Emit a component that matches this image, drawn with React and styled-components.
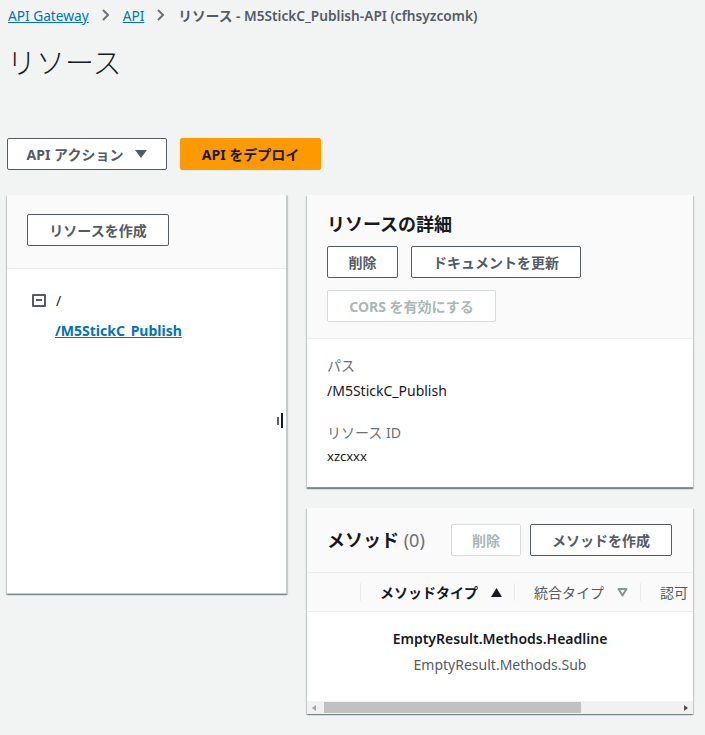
import React from 'react';
import styled, { createGlobalStyle } from 'styled-components';

const GlobalStyle = createGlobalStyle`
  html, body {
    margin: 0;
    padding: 0;
    background: #f2f3f3;
  }
  body {
    font-family: "Noto Sans", "Noto Sans CJK JP", sans-serif;
    color: #16191f;
    font-size: 14px;
  }
  * { box-sizing: border-box; }
`;

const Page = styled.div`
  width: 705px;
  height: 735px;
  overflow: hidden;
  padding: 5px 0 0 7px;
`;

const Crumbs = styled.nav`
  display: flex;
  align-items: center;
  gap: 9px;
  height: 20px;
  padding-left: 1px;
  font-size: 13.7px;
  white-space: nowrap;

  a {
    color: #0073bb;
    text-decoration: underline;
  }
  span.current {
    color: #545b64;
    font-weight: 600;
  }
`;

const Chevron = styled.svg`
  width: 12px;
  height: 12px;
  margin: 0 2px;
`;

const Title = styled.h1`
  margin: 18px 0 0 0;
  font-size: 29px;
  font-weight: 300;
  line-height: 40px;
  color: #16191f;
`;

const Actions = styled.div`
  display: flex;
  gap: 13px;
  margin-top: 55px;
`;

const Button = styled.button`
  height: 32px;
  padding: 0 20px;
  border-radius: 2px;
  font-family: inherit;
  font-size: 14px;
  font-weight: 700;
  white-space: nowrap;
  display: inline-flex;
  align-items: center;
  justify-content: center;
  gap: 12px;
  background: ${(p) => (p.$primary ? '#ff9900' : '#fff')};
  border: 1px solid ${(p) => (p.$primary ? '#ff9900' : p.disabled ? '#d5dbdb' : '#545b64')};
  color: ${(p) => (p.$primary ? '#16191f' : p.disabled ? '#aab7b8' : '#545b64')};
  width: ${(p) => (p.$w ? `${p.$w}px` : 'auto')};
`;

const Caret = styled.span`
  width: 0;
  height: 0;
  border-left: 6px solid transparent;
  border-right: 6px solid transparent;
  border-top: 8px solid #545b64;
`;

const Columns = styled.div`
  display: flex;
  gap: 20px;
  margin-top: 25px;
  align-items: flex-start;
`;

const Panel = styled.section`
  position: relative;
  background: #fff;
  box-shadow: 0 1px 1px 0 rgba(0, 28, 36, 0.3), 1px 1px 1px 0 rgba(0, 28, 36, 0.15),
    -1px 1px 1px 0 rgba(0, 28, 36, 0.15);
  border-bottom: ${(p) => (p.$line ? '1px solid #879596' : 'none')};
`;

const TreePanel = styled(Panel)`
  width: 280px;
  height: 399px;
  border-right: 1px solid #c5cbcb;
  border-bottom: 1px solid #c5cbcb;
`;

const GrayHead = styled.div`
  background: #fafafa;
  border-bottom: 1px solid #eaeded;
  padding: ${(p) => p.$pad};
`;

const TreeBody = styled.div`
  padding: 24px 0 0 25px;
`;

const TreeRow = styled.div`
  display: flex;
  align-items: center;
  gap: 10px;
  height: 14px;
  color: #16191f;
`;

const Collapse = styled.span`
  width: 14px;
  height: 13px;
  border: 2px solid #545b64;
  border-radius: 1px;
  display: flex;
  align-items: center;
  justify-content: center;

  &::after {
    content: '';
    width: 6px;
    height: 2px;
    background: #545b64;
  }
`;

const TreeLink = styled.a`
  display: block;
  margin: 14px 0 0 23px;
  color: #0073bb;
  font-weight: 700;
  text-decoration: underline;
`;

const Resizer = styled.div`
  position: absolute;
  right: 3px;
  top: 218px;
  display: flex;
  align-items: center;
  gap: 2px;

  span {
    width: 2px;
    background: #16191f;
  }
  span:first-child { height: 8px; opacity: 0.7; }
  span:last-child { height: 15px; }
`;

const RightCol = styled.div`
  width: 386px;
  display: flex;
  flex-direction: column;
  gap: 20px;
`;

const PanelTitle = styled.h2`
  margin: 0;
  font-size: 18px;
  font-weight: 700;
  line-height: 24px;
  color: #16191f;

  small {
    font-size: 18px;
    font-weight: 400;
    color: #687078;
  }
`;

const ButtonRow = styled.div`
  display: flex;
  gap: ${(p) => p.$gap || 13}px;
  margin-top: ${(p) => p.$mt || 0}px;
`;

const Details = styled.div`
  padding: 17px 20px 21px;
  line-height: 20px;
`;

const Label = styled.div`
  color: #687078;
  margin-top: ${(p) => p.$mt || 0}px;
`;

const Value = styled.div`
  color: #16191f;
  margin-top: ${(p) => (p.$small ? 3 : 5)}px;
  font-size: ${(p) => (p.$small ? 13 : 14)}px;
`;

const MethodsHead = styled(GrayHead)`
  height: 65px;
  display: flex;
  align-items: center;
  justify-content: space-between;
`;

const TableHead = styled.div`
  display: flex;
  height: 39px;
  background: #fafafa;
  border-bottom: 1px solid #eaeded;
  overflow: hidden;
  white-space: nowrap;
`;

const Th = styled.div`
  position: relative;
  flex: 0 0 ${(p) => p.$w}px;
  display: flex;
  align-items: center;
  gap: 13px;
  padding-left: 20px;
  font-weight: ${(p) => (p.$active ? 700 : 400)};
  color: ${(p) => (p.$active ? '#16191f' : '#545b64')};

  &::before {
    content: '';
    display: ${(p) => (p.$sep ? 'block' : 'none')};
    position: absolute;
    left: 0;
    top: 10px;
    height: 18px;
    width: 1px;
    background: #eaeded;
  }
`;

const SortIcon = styled.svg`
  width: 11px;
  height: 9px;
`;

const Empty = styled.div`
  height: 89px;
  display: flex;
  flex-direction: column;
  align-items: center;
  padding-top: 17px;
  gap: 6px;
  line-height: 20px;

  b { color: #16191f; font-size: 14px; font-weight: 600; }
  span { color: #545b64; }
`;

const Scrollbar = styled.div`
  height: 13px;
  background: #f1f1f1;
  display: flex;
  align-items: center;
  padding: 0 5px;
  gap: 6px;
`;

const Arrow = styled.span`
  width: 0;
  height: 0;
  border-top: 3px solid transparent;
  border-bottom: 3px solid transparent;
  ${(p) => (p.$left ? 'border-right: 4px solid #a3a3a3;' : 'border-left: 4px solid #505050;')}
`;

const Track = styled.div`
  flex: 1;
  height: 11px;
  display: flex;
  padding-left: 2px;
`;

const Thumb = styled.div`
  height: 100%;
  width: 257px;
  background: #c1c1c1;
`;

const Chev = () => (
  <Chevron viewBox="0 0 12 12">
    <path d="M3 1l5 5-5 5" fill="none" stroke="#687078" strokeWidth="2" />
  </Chevron>
);

export default function App() {
  return (
    <>
      <GlobalStyle />
      <Page>
        <Crumbs>
          <a>API Gateway</a>
          <Chev />
          <a>API</a>
          <Chev />
          <span className="current">リソース - M5StickC_Publish-API (cfhsyzcomk)</span>
        </Crumbs>
        <Title>リソース</Title>
        <Actions>
          <Button $w={160}>
            API アクション <Caret />
          </Button>
          <Button $primary $w={141}>API をデプロイ</Button>
        </Actions>

        <Columns>
          <TreePanel>
            <GrayHead $pad="19px 20px 22px">
              <Button $w={142}>リソースを作成</Button>
            </GrayHead>
            <TreeBody>
              <TreeRow>
                <Collapse />
                <span>/</span>
              </TreeRow>
              <TreeLink>/M5StickC_Publish</TreeLink>
            </TreeBody>
            <Resizer>
              <span />
              <span />
            </Resizer>
          </TreePanel>

          <RightCol>
            <Panel $line>
              <GrayHead $pad="17px 20px 16px">
                <PanelTitle>リソースの詳細</PanelTitle>
                <ButtonRow $mt={10}>
                  <Button $w={71}>削除</Button>
                  <Button $w={170}>ドキュメントを更新</Button>
                </ButtonRow>
                <ButtonRow $mt={12}>
                  <Button disabled $w={169}>CORS を有効にする</Button>
                </ButtonRow>
              </GrayHead>
              <Details>
                <Label>パス</Label>
                <Value>/M5StickC_Publish</Value>
                <Label $mt={22}>リソース ID</Label>
                <Value $small>xzcxxx</Value>
              </Details>
            </Panel>

            <Panel>
              <MethodsHead $pad="0 21px 0 20px">
                <PanelTitle>
                  メソッド <small>(0)</small>
                </PanelTitle>
                <ButtonRow $gap={9}>
                  <Button disabled $w={70}>削除</Button>
                  <Button $w={142}>メソッドを作成</Button>
                </ButtonRow>
              </MethodsHead>
              <TableHead>
                <Th $w={53} />
                <Th $w={154} $sep $active>
                  メソッドタイプ
                  <SortIcon viewBox="0 0 11 9">
                    <path d="M5.5 0L11 9H0z" fill="#16191f" />
                  </SortIcon>
                </Th>
                <Th $w={126} $sep>
                  統合タイプ
                  <SortIcon viewBox="0 0 11 9">
                    <path d="M1.5 1h8L5.5 7.5z" fill="none" stroke="#879596" strokeWidth="2" strokeLinejoin="round" />
                  </SortIcon>
                </Th>
                <Th $w={80} $sep>認可</Th>
              </TableHead>
              <Empty>
                <b>EmptyResult.Methods.Headline</b>
                <span>EmptyResult.Methods.Sub</span>
              </Empty>
              <Scrollbar>
                <Arrow $left />
                <Track>
                  <Thumb />
                </Track>
                <Arrow />
              </Scrollbar>
            </Panel>
          </RightCol>
        </Columns>
      </Page>
    </>
  );
}
